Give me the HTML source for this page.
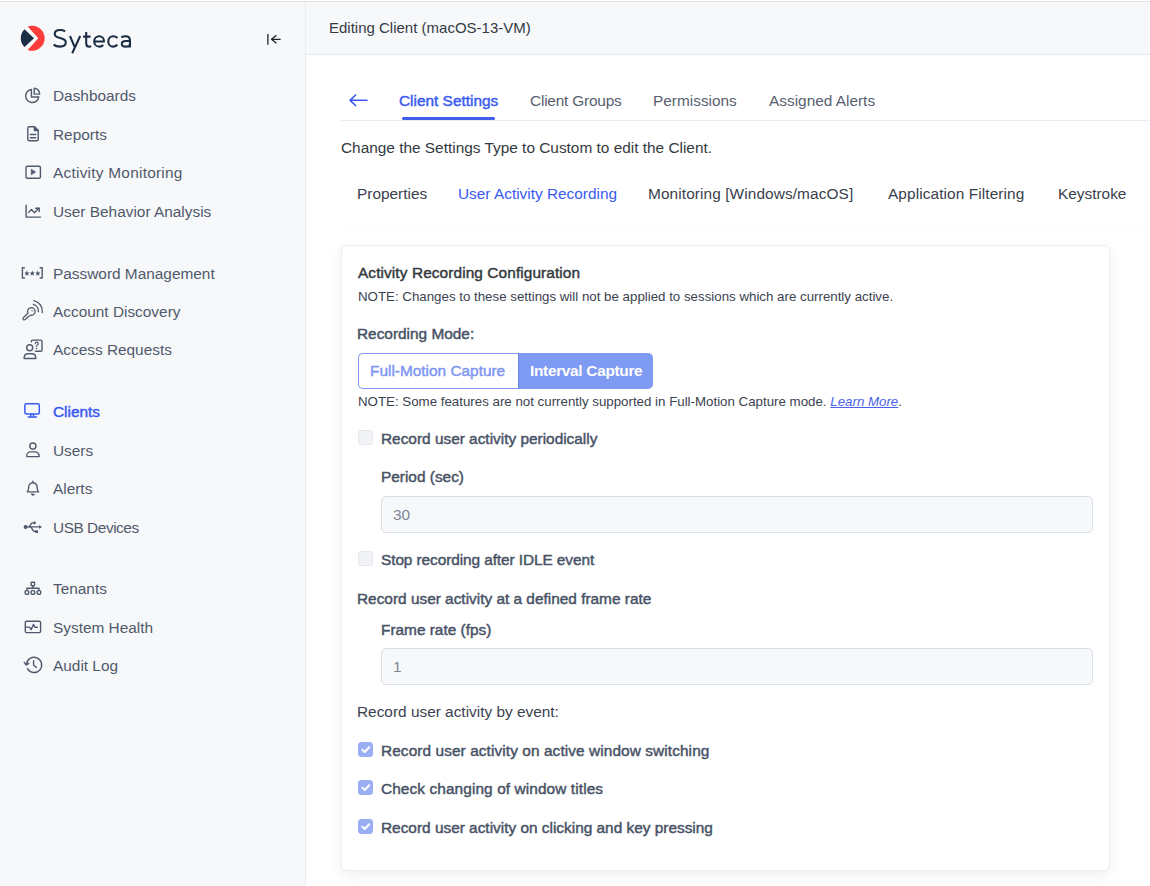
<!DOCTYPE html>
<html><head><meta charset="utf-8">
<style>
*{box-sizing:border-box;margin:0;padding:0}
html,body{width:1150px;height:886px;overflow:hidden;background:#fff;font-family:"Liberation Sans",sans-serif}
.abs{position:absolute}
.t{position:absolute;white-space:nowrap;font-size:15.4px;line-height:20px;height:20px}
.topline{left:0;top:1px;width:1150px;height:1px;background:#dfe2e1}
#side{left:0;top:2px;width:305px;height:884px;background:#f7f8fa}
#sideborder{left:305px;top:2px;width:1px;height:884px;background:#e8ebf0}
#hdr{left:306px;top:2px;width:844px;height:52px;background:#f7f8fa}
#hdrb{left:306px;top:54px;width:844px;height:1px;background:#e6e9ee}
.nav{color:#505a6c}
.nav.act{color:#3a5af2;-webkit-text-stroke:0.45px #3a5af2}
.ico{position:absolute;overflow:visible}
.ico *{fill:none;stroke:#5a6477;stroke-width:1.5;stroke-linecap:round;stroke-linejoin:round}
.tab{color:#575f6f}
.card{left:341px;top:245px;width:769px;height:626px;border:1px solid #eceef2;border-radius:6px;background:#fff;box-shadow:0 4px 14px rgba(0,0,0,0.07)}
.lbl{color:#485266;-webkit-text-stroke:0.45px #485266}
.note{font-size:13.3px;color:#3b4250}
.inp{position:absolute;left:381px;width:712px;height:37px;background:#f6f8fa;border:1px solid #d9dfe7;border-radius:5px}
.cb{position:absolute;left:358px;width:15px;height:15px;border-radius:3px;background:#f1f3f7;border:1px solid #e4e8ee}
.cb.on{background:#9aaef4;border-color:#9aaef4}
</style></head><body>
<div class="abs topline"></div>
<div class="abs" id="side"></div>
<div class="abs" id="sideborder"></div>
<div class="abs" id="hdr"></div>
<div class="abs" id="hdrb"></div>

<!-- logo -->
<svg class="abs" style="left:0;top:0;overflow:visible" width="60" height="60" viewBox="0 0 60 60">
  <path d="M24.5 29.3 L34 38.3 L24.5 47 A12.5 12.5 0 0 1 24.5 29.3 Z" fill="#1c2e45"/>
  <path d="M27.7 26.6 A12.5 12.5 0 1 1 27.7 49.9 L38.3 38.3 Z" fill="#ff3c3c"/>
</svg>
<svg class="abs" style="left:0;top:0;overflow:visible" width="140" height="60" viewBox="0 0 140 60"><g fill="none" stroke="#1b2d44" stroke-width="2.05" stroke-linecap="butt" stroke-linejoin="round">
<path d="M65.2 31.3 C63.5 30.3 61.8 30 60 30 C56.5 30 54.7 31.7 54.7 34 C54.7 39.5 65.8 36.7 65.8 42.3 C65.8 44.9 63.6 46.6 59.9 46.6 C57.2 46.6 54.9 45.7 53.6 44.6"/>
<path d="M70 36 L74.6 46.8 M80.2 36 L72.2 53.2"/>
<path d="M86.2 32 V43.2 C86.2 45.6 87.3 46.7 89.2 46.7 C89.9 46.7 90.6 46.5 91.1 46.2 M83.1 36.6 H90.6"/>
<path d="M94.4 41.4 H104 C104 38.4 102 36.2 99.2 36.2 C96.3 36.2 94.2 38.5 94.2 41.4 C94.2 44.4 96.4 46.6 99.4 46.6 C101 46.6 102.3 46 103.2 45"/>
<path d="M117.4 38.1 C116.5 36.9 115 36.2 113.2 36.2 C110.3 36.2 108.3 38.5 108.3 41.4 C108.3 44.3 110.3 46.6 113.2 46.6 C115 46.6 116.5 45.9 117.4 44.7"/>
<path d="M121.3 37.4 C122.5 36.6 124 36.2 125.6 36.2 C128.5 36.2 130 37.7 130 40.6 V47.6 M130 43.4 C130 45.4 128.3 46.6 125.7 46.6 C123.3 46.6 121.8 45.6 121.8 43.7 C121.8 41.9 123.3 41 125.8 41 H130"/>
</g></svg>
<svg class="ico" style="left:262px;top:30px" width="24" height="20" viewBox="0 0 24 20">
  <path d="M5.9 4.1 V14.7 M9.5 9.3 H18.6 M14.4 5.2 L9.5 9.3 L14.4 13.2" style="stroke:#1f2329;stroke-width:1.3;stroke-linecap:butt"/>
</svg>

<!-- sidebar nav -->
<div class="t nav" style="left:53px;top:86px">Dashboards</div>
<div class="t nav" style="left:53px;top:125px">Reports</div>
<div class="t nav" style="left:53px;top:163px;letter-spacing:0.25px">Activity Monitoring</div>
<div class="t nav" style="left:53px;top:202px">User Behavior Analysis</div>
<div class="t nav" style="left:53px;top:264px">Password Management</div>
<div class="t nav" style="left:53px;top:302px">Account Discovery</div>
<div class="t nav" style="left:53px;top:340px">Access Requests</div>
<div class="t nav act" style="left:53px;top:402px">Clients</div>
<div class="t nav" style="left:53px;top:441px">Users</div>
<div class="t nav" style="left:53px;top:479px">Alerts</div>
<div class="t nav" style="left:53px;top:518px;letter-spacing:-0.45px">USB Devices</div>
<div class="t nav" style="left:53px;top:579px">Tenants</div>
<div class="t nav" style="left:53px;top:618px">System Health</div>
<div class="t nav" style="left:53px;top:656px">Audit Log</div>

<!-- header -->
<div class="t" style="left:329px;top:18px;color:#343a46;font-size:15px">Editing Client (macOS-13-VM)</div>

<!-- main tabs -->
<svg class="ico" style="left:347px;top:92px" width="24" height="16" viewBox="0 0 24 16">
  <path d="M3 8.3 H20 M8.6 3 L3 8.3 L8.6 13.5" style="stroke:#3a5af2;stroke-width:1.6"/>
</svg>
<div class="t" style="left:399px;top:91px;color:#3a5af2;-webkit-text-stroke:0.45px #3a5af2">Client Settings</div>
<div class="t tab" style="left:530px;top:91px;letter-spacing:-0.2px">Client Groups</div>
<div class="t tab" style="left:653px;top:91px">Permissions</div>
<div class="t tab" style="left:769px;top:91px">Assigned Alerts</div>
<div class="abs" style="left:341px;top:120px;width:809px;height:1px;background:#e9ecf0"></div>
<div class="abs" style="left:402px;top:117px;width:93px;height:3px;border-radius:2px;background:#3e5ce8"></div>

<div class="t" style="left:341px;top:138px;color:#343a40">Change the Settings Type to Custom to edit the Client.</div>

<!-- sub tabs -->
<div class="t" style="left:357px;top:184px;color:#3a404c">Properties</div>
<div class="t" style="left:458px;top:184px;color:#3a5af2">User Activity Recording</div>
<div class="t" style="left:648px;top:184px;color:#3a404c;letter-spacing:0.1px">Monitoring [Windows/macOS]</div>
<div class="t" style="left:888px;top:184px;color:#3a404c;letter-spacing:0.1px">Application Filtering</div>
<div class="t" style="left:1058px;top:184px;color:#3a404c">Keystroke</div>
<div class="abs" style="left:341px;top:228px;width:809px;height:1px;background:#fbfbfc"></div>

<!-- card -->
<div class="abs card"></div>
<div class="t" style="left:358px;top:263px;color:#343a40;-webkit-text-stroke:0.45px #343a40;letter-spacing:0.1px">Activity Recording Configuration</div>
<div class="t note" style="left:358px;top:287px">NOTE: Changes to these settings will not be applied to sessions which are currently active.</div>
<div class="t lbl" style="left:357px;top:324px">Recording Mode:</div>

<div class="abs" style="left:358px;top:353px;width:161px;height:36px;border:1px solid #7f96f2;border-right:none;border-radius:5px 0 0 5px;background:#fff"></div>
<div class="abs" style="left:518px;top:353px;width:135px;height:36px;border-radius:0 5px 5px 0;background:#7f9af2;border-left:1px solid #6f88f0"></div>
<div class="t" style="left:370px;top:361px;color:#7f96f2;-webkit-text-stroke:0.45px #7f96f2">Full-Motion Capture</div>
<div class="t" style="left:530px;top:361px;color:#fff;font-weight:bold;letter-spacing:-0.3px">Interval Capture</div>

<div class="t note" style="left:358px;top:392px">NOTE: Some features are not currently supported in Full-Motion Capture mode. <i style="color:#4a62e8;text-decoration:underline">Learn More</i>.</div>

<div class="cb" style="top:430px"></div>
<div class="t lbl" style="left:381px;top:429px">Record user activity periodically</div>
<div class="t lbl" style="left:381px;top:467px">Period (sec)</div>
<div class="inp" style="top:496px"></div>
<div class="t" style="left:393px;top:505px;color:#7d8696">30</div>

<div class="cb" style="top:551px"></div>
<div class="t lbl" style="left:381px;top:550px;letter-spacing:-0.08px">Stop recording after IDLE event</div>
<div class="t lbl" style="left:357px;top:589px">Record user activity at a defined frame rate</div>
<div class="t lbl" style="left:381px;top:620px">Frame rate (fps)</div>
<div class="inp" style="top:648px"></div>
<div class="t" style="left:393px;top:657px;color:#7d8696">1</div>

<div class="t" style="left:357px;top:702px;color:#3b4250">Record user activity by event:</div>

<div class="cb on" style="top:742px"><svg width="15" height="15" viewBox="0 0 15 15" style="position:absolute;left:-1px;top:-1px"><path d="M4.3 7.6 L6.7 10 L11.2 5.3" fill="none" stroke="#fff" stroke-width="2" stroke-linecap="round" stroke-linejoin="round"/></svg></div>
<div class="t lbl" style="left:381px;top:741px;letter-spacing:0.09px">Record user activity on active window switching</div>
<div class="cb on" style="top:780px"><svg width="15" height="15" viewBox="0 0 15 15" style="position:absolute;left:-1px;top:-1px"><path d="M4.3 7.6 L6.7 10 L11.2 5.3" fill="none" stroke="#fff" stroke-width="2" stroke-linecap="round" stroke-linejoin="round"/></svg></div>
<div class="t lbl" style="left:381px;top:779px;letter-spacing:0.1px">Check changing of window titles</div>
<div class="cb on" style="top:819px"><svg width="15" height="15" viewBox="0 0 15 15" style="position:absolute;left:-1px;top:-1px"><path d="M4.3 7.6 L6.7 10 L11.2 5.3" fill="none" stroke="#fff" stroke-width="2" stroke-linecap="round" stroke-linejoin="round"/></svg></div>
<div class="t lbl" style="left:381px;top:818px">Record user activity on clicking and key pressing</div>

<svg class="abs" style="left:0;top:0;overflow:visible" width="306" height="700" viewBox="0 0 306 700">
<g fill="none" stroke="#505a6c" stroke-width="1.4" stroke-linecap="round" stroke-linejoin="round">
 <!-- dashboards pie -->
 <path d="M31.4 89.4 A6.6 6.6 0 1 0 38.8 97 H31.4 Z"/>
 <path d="M34.2 88.2 V94.1 H39.7 A6.3 6.3 0 0 0 34.2 88.2 Z"/>
 <!-- reports doc -->
 <path d="M29.4 126.8 H34.4 L38.2 130.6 V139.2 A1.5 1.5 0 0 1 36.7 140.8 H29.3 A1.5 1.5 0 0 1 27.8 139.3 V128.3 A1.5 1.5 0 0 1 29.3 126.8 Z"/>
 <path d="M34.4 126.8 V130.6 H38.2 Z" fill="#505a6c"/>
 <path d="M30.3 134.5 H35.7 M30.3 137.7 H35.7"/>
 <!-- activity monitoring -->
 <rect x="26" y="166.2" width="14.4" height="12.1" rx="1.4"/>
 <path d="M31.2 169.4 V174.8 L35.6 172.1 Z" fill="#505a6c" stroke-width="0.6"/>
 <!-- UBA -->
 <path d="M26.1 205.2 V217.1 H40.5"/>
 <path d="M28.7 212.4 L31.4 209.4 L34.4 212.7 L38.9 208.3"/>
 <path d="M35.6 208.2 H39.2 V211.6"/>
 <!-- password [***] -->
 <path d="M24.4 267.8 H22.4 V278 H24.4 M40.2 267.8 H42.2 V278 H40.2"/>
 <!-- account discovery key -->
 
 <path d="M28 313.25 A3.8 3.8 0 1 1 30.9 315.2 L28.2 316.7 L25.4 319.3 Q24.2 320.3 23.3 319.5 Q22.5 318.6 23.5 317.5 Z" stroke-width="1.3"/>
 <path d="M33.4 304.3 A7 7 0 0 1 38.4 311.6"/>
 <path d="M33.9 300.6 A11 11 0 0 1 42.3 312.5"/>
 <!-- access requests -->
 <circle cx="29.7" cy="347.8" r="3"/>
 <path d="M24.1 358.5 H35.8 C35.8 355.7 34.5 353.8 32 353.8 H27.9 C25.4 353.8 24.1 355.7 24.1 358.5 Z"/>
 <path d="M31.4 341.7 V341.3 A1.2 1.2 0 0 1 32.6 340.1 H40.6 A1.4 1.4 0 0 1 42 341.5 V349.9 A1.4 1.4 0 0 1 40.6 351.3 H35.5"/>
 <path d="M35.3 343.6 A1.5 1.5 0 1 1 37.2 345.1 L36.6 346.3" stroke-width="1.2"/>
 <!-- users -->
 <circle cx="32.9" cy="446.1" r="3.1"/>
 <path d="M29.9 451.9 H35.9 A4 4 0 0 1 39.1 456.6 H26.9 A4 4 0 0 1 29.9 451.9 Z"/>
 <!-- alerts bell -->
 <path d="M32.9 481.2 V482.6 M27.3 491.9 H38.6 C37.6 490.8 37.1 489.3 37.1 487.6 V487 A4.2 4.3 0 0 0 28.7 487 V487.6 C28.7 489.3 28.3 490.8 27.3 491.9 Z"/>
 <path d="M31.6 494.1 H34.3 A1.35 1.2 0 0 1 31.6 494.1 Z" fill="#505a6c" stroke-width="0.9"/>
 <!-- usb -->
 <path d="M25.6 526.9 H39.5"/>
 <path d="M29.3 526.9 L31 524 Q31.8 522.9 33 522.9"/>
 <path d="M30.9 526.9 L33 530.4 Q33.6 531.5 35.3 531.5"/>
 <!-- tenants -->
 <rect x="31.2" y="582.3" width="3.4" height="3.4" rx="0.6"/>
 <path d="M32.9 585.7 V588.3 M26.9 590.5 V588.3 H39 V590.5"/>
 <rect x="25.1" y="590.6" width="3.6" height="3.6" rx="1.2"/>
 <rect x="31.1" y="590.6" width="3.6" height="3.6" rx="1.2"/>
 <rect x="37.1" y="590.6" width="3.6" height="3.6" rx="1.2"/>
 <!-- system health -->
 <rect x="25.3" y="621.2" width="15.3" height="11.4" rx="1.4"/>
 <path d="M25.6 627.1 H29.5 L31.1 629.7 L33.5 624.4 L35 627.3 H37.2"/>
 <!-- audit log -->
 <path d="M27.5 668.7 A7.6 7.6 0 1 0 26.5 664.4"/>
 <path d="M24.2 662.3 L26.2 665 L28.8 663.3"/>
 <path d="M33.6 660.6 V665.1 L36.4 667.6"/>
</g>
<g fill="#505a6c">
 <path transform="translate(26.9 273.3) scale(1.3)" d="M0 -2.1 L0.6 -0.7 L2 -0.6 L0.95 0.35 L1.25 1.8 L0 1.05 L-1.25 1.8 L-0.95 0.35 L-2 -0.6 L-0.6 -0.7 Z"/><path transform="translate(32.3 273.3) scale(1.3)" d="M0 -2.1 L0.6 -0.7 L2 -0.6 L0.95 0.35 L1.25 1.8 L0 1.05 L-1.25 1.8 L-0.95 0.35 L-2 -0.6 L-0.6 -0.7 Z"/><path transform="translate(37.8 273.3) scale(1.3)" d="M0 -2.1 L0.6 -0.7 L2 -0.6 L0.95 0.35 L1.25 1.8 L0 1.05 L-1.25 1.8 L-0.95 0.35 L-2 -0.6 L-0.6 -0.7 Z"/>
 <circle cx="25.6" cy="526.9" r="2"/>
 <circle cx="34.5" cy="522.9" r="1.4"/>
 <rect x="35.2" y="530.2" width="2.8" height="2.7" rx="0.3"/>
 <path d="M39.2 524.9 L41.9 526.9 L39.2 529 Z"/>
 <circle cx="36.7" cy="348.6" r="0.75"/>
 <circle cx="32.1" cy="310.9" r="0.7"/>
</g>
<g fill="none" stroke="#3a5af2" stroke-width="1.5" stroke-linecap="round" stroke-linejoin="round">
 <rect x="24.9" y="403.8" width="14.4" height="10.2" rx="1.5"/>
 <path d="M30.8 414.2 V416.6 M33.5 414.2 V416.6 M28.2 416.9 H36.4"/>
</g>
</svg>
</body></html>
